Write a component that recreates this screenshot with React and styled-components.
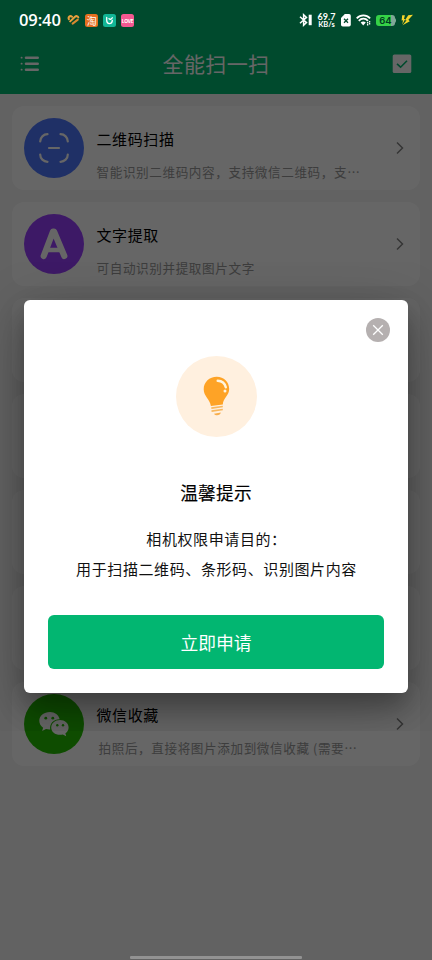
import React from "react";
import styled, { createGlobalStyle } from "styled-components";

const Global = createGlobalStyle`
  *, *::before, *::after { box-sizing: border-box; }
  html, body { margin: 0; padding: 0; overflow: hidden; }
  body, button { font-family: "Noto Sans CJK SC", sans-serif; }
  h1, h2, h3, p { margin: 0; font-weight: 400; }
  svg { display: block; }
`;

const Screen = styled.div`
  position: relative;
  width: 432px;
  height: 960px;
  overflow: hidden;
  background: #f4f4f4;
`;

const Header = styled.header`
  height: 94px;
  padding: 34px 20px 0;
  display: flex;
  align-items: center;
  justify-content: space-between;
  background: #00b871;
  color: #fff;
`;

const HeaderTitle = styled.h1`
  padding-bottom: 2px;
  font-size: 21px;
  line-height: 30px;
  letter-spacing: 0.4px;
`;

const List = styled.main`
  padding: 12px;
  display: flex;
  flex-direction: column;
  gap: 12px;
`;

const Card = styled.section`
  height: 84px;
  flex: none;
  padding: 0 13px 0 12px;
  border-radius: 12px;
  background: #fff;
  display: flex;
  align-items: center;
`;

const Round = styled.div`
  width: 60px;
  height: 60px;
  flex: none;
  border-radius: 50%;
  background: ${(p) => p.$color};
  display: flex;
  align-items: center;
  justify-content: center;
`;

const CardText = styled.div`
  flex: 1;
  min-width: 0;
  padding: 14px 0 0 12.5px;
  display: flex;
  flex-direction: column;
  gap: 12px;
`;

const CardTitle = styled.h2`
  font-size: 15px;
  line-height: 22px;
  letter-spacing: 0.6px;
  color: #000;
`;

const CardSub = styled.p`
  font-size: 12.6px;
  line-height: 20px;
  letter-spacing: 0.6px;
  color: #999;
  white-space: nowrap;
  padding-left: ${(p) => p.$indent || 0}px;
`;

const Scrim = styled.div`
  position: absolute;
  inset: 0;
  display: flex;
  flex-direction: column;
  background: rgba(0, 0, 0, 0.6);
`;

const StatusBar = styled.div`
  height: 40px;
  flex: none;
  padding: 0 19px;
  display: flex;
  align-items: center;
  justify-content: space-between;
  color: #fff;
`;

const StatusGroup = styled.div`
  display: flex;
  align-items: center;
  gap: ${(p) => p.$gap}px;
`;

const Clock = styled.span`
  font: 600 16.5px/20px "Open Sans", sans-serif;
  letter-spacing: -0.1px;
  width: 43px;
`;

const AppBadge = styled.span`
  width: 13px;
  height: 13px;
  border-radius: 2.5px;
  background: ${(p) => p.$color};
  display: flex;
  align-items: center;
  justify-content: center;
  font-size: ${(p) => p.$size || 10}px;
  line-height: 13px;
  font-weight: ${(p) => (p.$size ? 700 : 400)};
  letter-spacing: -0.3px;
`;

const NetSpeed = styled.span`
  width: 19px;
  display: flex;
  flex-direction: column;
  align-items: center;
  font: 700 9px/9px Lato, sans-serif;
`;

const NetUnit = styled.small`
  font-size: 7.5px;
  line-height: 8px;
`;

const Battery = styled.span`
  width: 19px;
  height: 11px;
  border-radius: 3px;
  background: linear-gradient(90deg, #35d247 78%, #80a797 78%);
  color: #003d20;
  font: 600 9.5px/11px Inter, sans-serif;
  text-align: center;
`;

const BatteryTip = styled.i`
  width: 2px;
  height: 5px;
  margin-left: -1px;
  border-radius: 0 2px 2px 0;
  background: #80a797;
`;

const DialogWindow = styled.div`
  height: 469px;
  margin-top: 222px;
  padding: 38px 24px;
  overflow: hidden;
  flex: none;
`;

const Dialog = styled.div`
  height: 393px;
  padding: 0 24px;
  background: #fff;
  border-radius: 6px;
  box-shadow: 0 14px 26px rgba(0, 0, 0, 0.27), 0 14px 60px rgba(0, 0, 0, 0.24);
  display: flex;
  flex-direction: column;
  align-items: center;
`;

const CloseButton = styled.button`
  width: 24px;
  height: 24px;
  flex: none;
  align-self: flex-end;
  margin: 18px -6px 0 0;
  padding: 0;
  border: 0;
  border-radius: 50%;
  background: #b5b0b0;
  display: flex;
  align-items: center;
  justify-content: center;
`;

const BulbCircle = styled.div`
  width: 81px;
  height: 81px;
  flex: none;
  margin-top: 14px;
  border-radius: 50%;
  background: #fff0df;
`;

const DialogTitle = styled.h3`
  margin-top: 42px;
  font-size: 17.7px;
  line-height: 26px;
  letter-spacing: 0.2px;
  color: #000;
  -webkit-text-stroke: 0.15px #000;
`;

const DialogText = styled.p`
  margin-top: 18.5px;
  padding-left: 1px;
  font-size: 15px;
  line-height: 30.5px;
  letter-spacing: 0.6px;
  text-align: center;
  white-space: nowrap;
  color: #111;
`;

const ApplyButton = styled.button`
  width: 336px;
  height: 54px;
  flex: none;
  margin-top: auto;
  margin-bottom: 24px;
  padding: 0;
  border: 0;
  border-radius: 6px;
  background: #02b671;
  color: #fff;
  font-size: 17.8px;
`;

const HomeBar = styled.div`
  width: 172px;
  height: 3px;
  margin: auto auto 1px;
  border-radius: 1px;
  background: #929292;
`;

const ScanIcon = () => (
  <svg width="30" height="30" viewBox="0 0 30 30" fill="none" stroke="#fff" strokeWidth="2.2" strokeLinecap="round">
    <path d="M1.2 8.5C1.2 4.5 4.5 1.2 8.5 1.2M21.5 1.2C25.5 1.2 28.8 4.5 28.8 8.5M28.8 21.5C28.8 25.5 25.5 28.8 21.5 28.8M8.5 28.8C4.5 28.8 1.2 25.5 1.2 21.5M10 15H20" />
  </svg>
);

const LetterIcon = () => (
  <svg width="30" height="34" viewBox="0 0 30 34" fill="none" stroke="#fff" strokeLinecap="round" strokeLinejoin="round">
    <path d="M4.7 29L14 4.5H15L25.3 29" strokeWidth="6.2" />
    <path d="M9 23H21" strokeWidth="4.5" />
  </svg>
);

const WechatIcon = () => (
  <svg width="32" height="28" viewBox="0 0 32 28">
    <path fill="#fff" d="M12 2C5.8 2 1.3 5.8 1.3 10.8c0 2.9 1.4 5.2 3.8 6.9l-1 3.4 3.9-2.1c1.5.4 3 .5 4.2.4C11.5 13.3 16 9 21.7 9.2 20.6 5 17 2 12 2Z" />
    <path fill="#fff" d="M22 10c-5 0-8.8 3.3-8.8 7.4s3.8 7.4 8.8 7.4c1 0 2-.1 2.9-.4l3.3 1.9-.8-3.1c2-1.4 3.2-3.5 3.2-5.8 0-4.1-3.7-7.4-8.6-7.4Z" />
    <g fill="#25bf00"><circle cx="7.8" cy="8.2" r="1.4" /><circle cx="14.8" cy="8.2" r="1.4" /><circle cx="19.3" cy="15.2" r="1.2" /><circle cx="25" cy="15.2" r="1.2" /></g>
  </svg>
);

const Chevron = () => (
  <svg width="14" height="14" viewBox="0 0 14 14" fill="none" stroke="#858585" strokeWidth="1.5">
    <path d="M4 1.5L9.5 7L4 12.5" />
  </svg>
);

const MenuIcon = () => (
  <svg width="20" height="18" viewBox="0 0 20 18" fill="none" stroke="#fff" strokeWidth="2.6" strokeLinecap="round">
    <path d="M6 2.7H17.7M6 8.7H17.7M6 14.7H17.7" />
    <path d="M1.5 2.7h.2M1.5 8.7h.2M1.5 14.7h.2" strokeWidth="1.8" />
  </svg>
);

const CheckIcon = () => (
  <svg width="20" height="20" viewBox="0 0 20 20">
    <rect x="0.7" y="0.5" width="18.6" height="18.6" rx="1.6" fill="#fff" />
    <path d="M5 9.8L8.6 13.2L15 6.8" fill="none" stroke="#00b871" strokeWidth="1.6" />
  </svg>
);

const HeartIcon = () => (
  <svg width="13" height="12" viewBox="0 0 13 12" fill="none" strokeLinecap="round">
    <path d="M1.9 5.2C.8 3 3 1.3 5 2.7M3.2 7.4L8 2.8C9.2 1.7 11 2 11.3 3.4" stroke="#e9a03d" strokeWidth="2" />
    <path d="M5.6 9.6L10.8 5.6" stroke="#d88930" strokeWidth="2" />
  </svg>
);

const FaceIcon = () => (
  <svg width="9" height="9" viewBox="0 0 9 9" fill="none" stroke="#fff" strokeWidth="1.3" strokeLinecap="round">
    <path d="M1.7 1.4V4.3C1.7 8.6 7.3 8.6 7.3 4.3M4 2.6C4.8 3.7 6.5 3.5 7.3 1.8" />
  </svg>
);

const BluetoothIcon = () => (
  <svg width="13" height="14" viewBox="0 0 13 14" fill="none" stroke="#fff" strokeWidth="1.5">
    <path d="M1 3.8L7.5 9.6L4.6 12.3V1.7L7.5 4.4L1 10.2" />
    <path d="M11.2 1.7V12.2" strokeWidth="3" />
  </svg>
);

const SimIcon = () => (
  <svg width="10" height="13" viewBox="0 0 10 13">
    <path d="M3.8 0H8a1.8 1.8 0 0 1 1.8 1.8v9A1.8 1.8 0 0 1 8 12.6H1.8A1.8 1.8 0 0 1 0 10.8V4Z" fill="#fff" />
    <path d="M3 4.7L7 8.7M7 4.7L3 8.7" stroke="#00492c" strokeWidth="1.3" />
  </svg>
);

const WifiIcon = () => (
  <svg width="15" height="12" viewBox="0 0 15 12" fill="none" stroke="#fff" strokeWidth="1.8">
    <path d="M.7 4.3C4.5.4 10.3.4 14.1 4.3M2.8 6.8C5.4 4 9.4 4 12 6.8" />
    <path d="M4.7 8.6C6.3 7 8.3 7 9.8 8.6L7.2 11.5Z" fill="#fff" stroke="none" />
    <path d="M11.6 8v3.6M13.6 7v3.4" strokeWidth="1.3" strokeDasharray="1.5 .6" />
  </svg>
);

const BoltIcon = () => (
  <svg width="12" height="12" viewBox="0 0 12 12" fill="#f4d52b">
    <path d="M1.2 1.2L.6 6.5L2 6.2L1.3 10.4L4.2 5H3L3.9 1.2Z" />
    <path d="M12 .8L7.2 1.2L4 6.2H5.6L1.6 11.3L8.8 7.2L7.4 5.8Z" />
  </svg>
);

const Bulb = () => (
  <svg width="81" height="81" viewBox="0 0 81 81" fill="none">
    <path fill="#fea326" d="M40.8 20.8C33.3 20.8 27.7 26.2 27.7 33.2c0 7.2 6.2 9.6 7.2 16.8l11.9-1.5c.3-6.5 6.4-9 6.4-15.5 0-7-5.4-12.2-12.4-12.2Z" />
    <path d="M41.7 24.8C45.8 25 48.8 27.3 49.8 31.3" stroke="#fff5df" strokeWidth="2.4" strokeLinecap="round" />
    <circle cx="49" cy="35" r="1.5" fill="#fff5df" />
    <path d="M35.3 52.1L46.8 50.5M35.5 55.1L46.8 53.5" stroke="#f7b75e" strokeWidth="1.7" />
    <path d="M38 57.7L44.8 56.6C44.8 59.2 39.6 60.3 38 57.7Z" fill="#f8ae4c" />
  </svg>
);

const cards = [
  { title: "二维码扫描", sub: "智能识别二维码内容，支持微信二维码，支…", color: "#4f78ff", icon: <ScanIcon /> },
  { title: "文字提取", sub: "可自动识别并提取图片文字", color: "#9a3fff", icon: <LetterIcon /> },
  null,
  null,
  null,
  null,
  { title: "微信收藏", sub: "拍照后，直接将图片添加到微信收藏 (需要…", color: "#25bf00", icon: <WechatIcon />, indent: 2 },
];

export default function App() {
  return (
    <Screen lang="zh-CN">
      <Global />
      <Header>
        <MenuIcon />
        <HeaderTitle>全能扫一扫</HeaderTitle>
        <CheckIcon />
      </Header>
      <List>
        {cards.map((card, i) => (
          <Card key={i}>
            {card && (
              <>
                <Round $color={card.color}>{card.icon}</Round>
                <CardText>
                  <CardTitle>{card.title}</CardTitle>
                  <CardSub $indent={card.indent}>{card.sub}</CardSub>
                </CardText>
                <Chevron />
              </>
            )}
          </Card>
        ))}
      </List>
      <Scrim>
        <StatusBar>
          <StatusGroup $gap={5}>
            <Clock>09:40</Clock>
            <HeartIcon />
            <AppBadge $color="#e46f20">淘</AppBadge>
            <AppBadge $color="#12b696"><FaceIcon /></AppBadge>
            <AppBadge $color="#f45891" $size={5}>LOVE</AppBadge>
          </StatusGroup>
          <StatusGroup $gap={5}>
            <BluetoothIcon />
            <NetSpeed>69.7<NetUnit>KB/s</NetUnit></NetSpeed>
            <SimIcon />
            <WifiIcon />
            <StatusGroup $gap={0}><Battery>64</Battery><BatteryTip /></StatusGroup>
            <BoltIcon />
          </StatusGroup>
        </StatusBar>
        <DialogWindow>
          <Dialog>
            <CloseButton aria-label="关闭">
              <svg width="12" height="12" viewBox="0 0 12 12" stroke="#fff" strokeWidth="1.3"><path d="M1.2 1.2L10.8 10.8M10.8 1.2L1.2 10.8" /></svg>
            </CloseButton>
            <BulbCircle><Bulb /></BulbCircle>
            <DialogTitle>温馨提示</DialogTitle>
            <DialogText>相机权限申请目的：<br />用于扫描二维码、条形码、识别图片内容</DialogText>
            <ApplyButton>立即申请</ApplyButton>
          </Dialog>
        </DialogWindow>
        <HomeBar />
      </Scrim>
    </Screen>
  );
}
